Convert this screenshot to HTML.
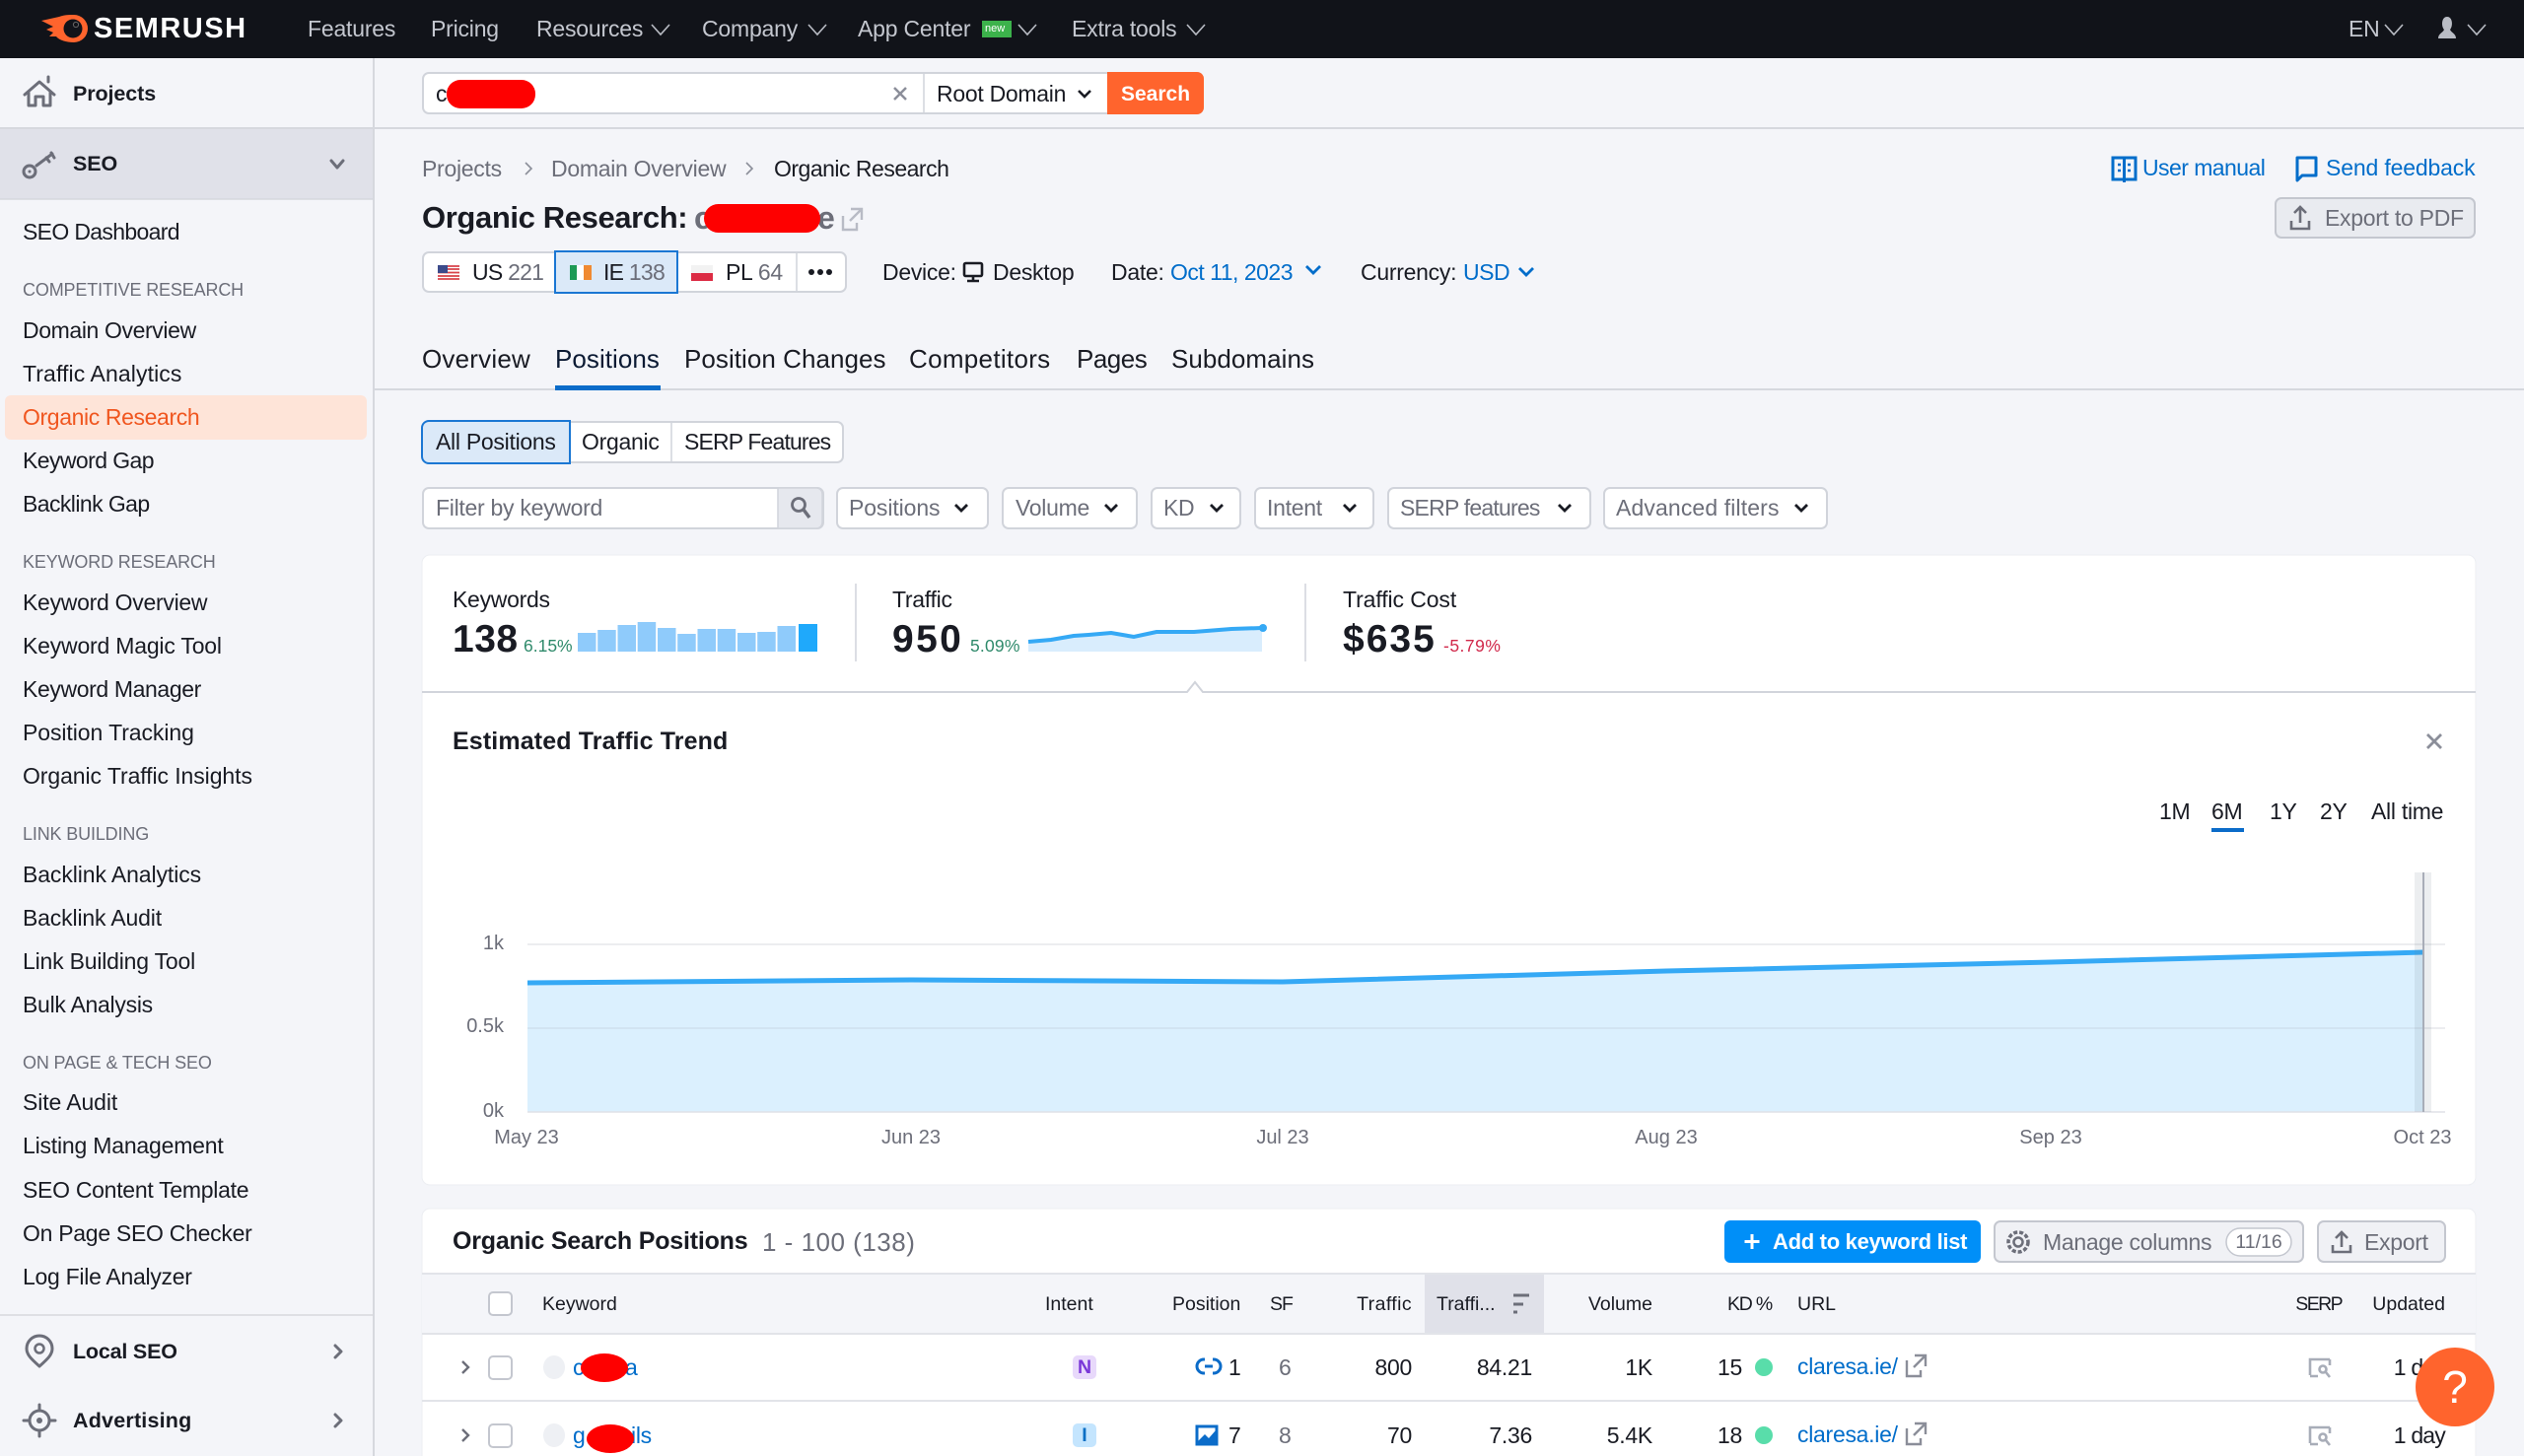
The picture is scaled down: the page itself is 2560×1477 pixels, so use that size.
<!DOCTYPE html>
<html lang="en"><head><meta charset="utf-8"><title>Organic Research</title>
<style>
html,body{margin:0;padding:0;background:#f4f5f9}
body{position:relative;width:2560px;height:1477px;overflow:hidden;font-family:"Liberation Sans",sans-serif;color:#191b23}
svg.l{position:absolute;left:0;top:0}
.t{position:absolute;white-space:nowrap;line-height:0;font-size:23px;letter-spacing:-.28px}
.r{transform:translateX(-100%)}
.c{transform:translateX(-50%)}
.b{font-weight:700}
.n{color:#c4c7cf;font-size:23px;top:29px;letter-spacing:-.2px}
.h{font-size:18px;color:#6c6e79;left:23px;letter-spacing:-.15px}
.m{font-size:21.5px;left:74px;letter-spacing:-.1px}
.s{left:23px}
.g{color:#6c6e79}
.a{color:#006dca}
.f{top:515px;color:#6c6e79}
.th{top:1323px;font-size:19.5px;letter-spacing:0}
.x{font-size:20px;letter-spacing:0;top:1154px}
.tab{font-size:26px;top:364px;letter-spacing:.05px}
.p{font-size:17.5px;letter-spacing:0;top:655px}
.blob{position:absolute;background:#fe0000;border-radius:50%/50%}
</style></head><body>
<svg class="l" width="2560" height="1477" viewBox="0 0 2560 1477" fill="none">
<!-- topbar -->
<rect width="2560" height="59" fill="#111319"/>
<path d="M42 21L60 17C65 15 70 15 75 15A14 14 0 1 1 75 43C68 43 60 41 57 37L50 37 54 33 47 30 54 27z" fill="#ff642d"/>
<circle cx="74" cy="29" r="9.5" fill="#111319"/><circle cx="77" cy="25" r="2.6" fill="none" stroke="#666" stroke-width="1"/>
<g stroke="#b9bcc4" stroke-width="1.6">
<path d="M661 25l9 10 9-10M820 25l9 10 9-10M1033 25l9 10 9-10M1204 25l9 10 9-10M2419 25l9 10 9-10M2503 25l9 10 9-10"/>
</g>
<rect x="996" y="21" width="30" height="17" fill="#3cb24b"/>
<path d="M2473 39c0-5 5-6 6-9-3-3-3-13 3-13s6 10 3 13c1 3 6 4 6 9z" fill="#b9bcc4"/>
<!-- sidebar -->
<rect x="0" y="130" width="378" height="72" fill="#e0e1e9"/>
<path d="M0 130H2560" stroke="#d6d8de" stroke-width="2"/>
<path d="M0 202H378" stroke="#d6d8de" stroke-width="1.5"/>
<path d="M379 59V1477" stroke="#d6d8de" stroke-width="2"/>
<path d="M0 1334H378" stroke="#d6d8de" stroke-width="1.5"/>
<rect x="5" y="401" width="367" height="45" rx="6" fill="#fee4d8"/>
<path d="M25 96l15-13 15 13M29 94v13h7v-9h8v9h7V94M49 78v5" stroke="#6c6e79" stroke-width="3" stroke-linejoin="round" stroke-linecap="round"/>
<circle cx="30" cy="174" r="6" stroke="#6c6e79" stroke-width="3"/><circle cx="30" cy="174" r="1.5" fill="#6c6e79"/>
<path d="M37 168l16-12M47 160l3 4M52 155l3 5" stroke="#6c6e79" stroke-width="3" stroke-linecap="round"/>
<path d="M336 163l6 7 6-7" stroke="#6c6e79" stroke-width="3" stroke-linecap="round" stroke-linejoin="round"/>
<path d="M40 1386c-9-8-13-12-13-18a13 13 0 0 1 26 0c0 6-4 10-13 18z" stroke="#6c6e79" stroke-width="3" stroke-linejoin="round"/><circle cx="40" cy="1368" r="4.5" stroke="#6c6e79" stroke-width="2.5"/>
<circle cx="40" cy="1441" r="10" stroke="#6c6e79" stroke-width="3"/><circle cx="40" cy="1441" r="3" fill="#6c6e79"/>
<path d="M40 1425v6M40 1451v6M24 1441h6M50 1441h6" stroke="#6c6e79" stroke-width="3" stroke-linecap="round"/>
<path d="M340 1365l6 6-6 6M340 1435l6 6-6 6" stroke="#6c6e79" stroke-width="3" stroke-linecap="round" stroke-linejoin="round"/>
<!-- search -->
<rect x="429" y="74" width="791" height="41" rx="6" fill="#fff" stroke="#d1d4db" stroke-width="2"/>
<path d="M937 74v41" stroke="#d1d4db" stroke-width="1.5"/>
<path d="M1123 73h91a7 7 0 0 1 7 7v29a7 7 0 0 1-7 7h-91z" fill="#ff642d"/>
<path d="M907 89l12 12M919 89l-12 12" stroke="#8b8e99" stroke-width="2.5"/>
<path d="M1094 92l6 6 6-6" stroke="#191b23" stroke-width="2.6"/>
<!-- breadcrumb arrows -->
<path d="M533 165l6 6-6 6M757 165l6 6-6 6" stroke="#8b8e99" stroke-width="1.6"/>
<path d="M855 219v14h14v-7M863 212h11v11M874 212l-12 12" stroke="#b8bbc5" stroke-width="2.4"/>
<!-- country -->
<rect x="429" y="256" width="429" height="40" rx="6" fill="#fff" stroke="#d1d4db" stroke-width="2"/>
<path d="M808 256v40" stroke="#d1d4db" stroke-width="1.5"/>
<rect x="563" y="255" width="124" height="42" fill="#dbe9f8" stroke="#1b77d3" stroke-width="2"/>
<g>
<rect x="444" y="269" width="22" height="15" fill="#fff"/><path d="M444 270h22M444 273h22M444 276.5h22M444 280h22M444 283h22" stroke="#d8434a" stroke-width="1.7"/><rect x="444" y="269" width="10" height="8" fill="#3c4b8b"/>
<rect x="578" y="269" width="7" height="15" fill="#1e9a55"/><rect x="585" y="269" width="7" height="15" fill="#fff"/><rect x="592" y="269" width="8" height="15" fill="#f08a32"/>
<rect x="701" y="269" width="22" height="8" fill="#f2f2f2"/><rect x="701" y="277" width="22" height="8" fill="#dc2c44"/>
</g>
<circle cx="823" cy="276" r="3" fill="#191b23"/><circle cx="832" cy="276" r="3" fill="#191b23"/><circle cx="841" cy="276" r="3" fill="#191b23"/>
<!-- device -->
<rect x="978" y="267" width="18" height="13" rx="1.5" stroke="#191b23" stroke-width="2.6"/><path d="M987 281v3M981 285h12" stroke="#191b23" stroke-width="2.6"/>
<path d="M1325 270l7 7 7-7M1541 272l7 7 7-7" stroke="#006dca" stroke-width="2.8"/>
<!-- top right links -->
<path d="M2143 160h23v22h-23zM2154.5 160v25" stroke="#006dca" stroke-width="3"/><path d="M2148 167h3M2148 173h3M2158 167h3M2158 173h3" stroke="#006dca" stroke-width="2.5"/>
<path d="M2330 160h19v18h-14l-5 5z" stroke="#006dca" stroke-width="3" stroke-linejoin="round"/>
<rect x="2308" y="201" width="202" height="40" rx="6" fill="#e9ebf0" stroke="#c4c7cf" stroke-width="2"/>
<path d="M2333 210v16M2327 216l6-6 6 6M2324 224v8h18v-8" stroke="#6c6e79" stroke-width="2.6"/>
<!-- tabs -->
<path d="M380 395H2560" stroke="#d6d8de" stroke-width="2"/>
<rect x="563" y="391" width="107" height="5" fill="#0b6cc9"/>
<!-- subtabs -->
<rect x="429" y="428" width="426" height="41" rx="6" fill="#fff" stroke="#d1d4db" stroke-width="2"/>
<path d="M681 428v41" stroke="#d1d4db" stroke-width="1.5"/>
<path d="M578 427H435a7 7 0 0 0-7 7v29a7 7 0 0 0 7 7h143z" fill="#dbe9f8" stroke="#1b77d3" stroke-width="2"/>
<!-- filters -->
<rect x="429" y="495" width="406" height="41" rx="6" fill="#fff" stroke="#d1d4db" stroke-width="2"/>
<path d="M789 495h39a6 6 0 0 1 6 6v29a6 6 0 0 1-6 6h-39z" fill="#e6e8ee" stroke="#d1d4db" stroke-width="1.5"/>
<circle cx="810" cy="512" r="6.5" stroke="#6c6e79" stroke-width="2.8"/><path d="M815 517l6 8" stroke="#6c6e79" stroke-width="3.5"/>
<g fill="#fff" stroke="#d1d4db" stroke-width="2">
<rect x="849" y="495" width="153" height="41" rx="6"/>
<rect x="1017" y="495" width="136" height="41" rx="6"/>
<rect x="1168" y="495" width="90" height="41" rx="6"/>
<rect x="1273" y="495" width="120" height="41" rx="6"/>
<rect x="1408" y="495" width="205" height="41" rx="6"/>
<rect x="1627" y="495" width="226" height="41" rx="6"/>
</g>
<path d="M969 512l6 6 6-6M1121 512l6 6 6-6M1228 512l6 6 6-6M1363 512l6 6 6-6M1581 512l6 6 6-6M1821 512l6 6 6-6" stroke="#191b23" stroke-width="2.8"/>
<!-- card -->
<rect x="428" y="563" width="2083" height="639" rx="8" fill="#fff" stroke="#eceef2" stroke-width="1"/>
<path d="M428 702H1204l8-10 8 10H2511" stroke="#d1d4db" stroke-width="2" fill="#fff"/>
<path d="M868 592v79M1324 592v79" stroke="#d1d4db" stroke-width="1.5"/>
<g fill="#8fcbfb">
<rect x="586" y="642" width="18.5" height="19"/><rect x="606.2" y="639" width="18.5" height="22"/><rect x="626.5" y="634" width="18.5" height="27"/><rect x="646.7" y="631" width="18.5" height="30"/><rect x="667" y="637" width="18.5" height="24"/><rect x="687.2" y="643" width="18.5" height="18"/><rect x="707.5" y="638" width="18.5" height="23"/><rect x="727.7" y="638" width="18.5" height="23"/><rect x="748" y="642" width="18.5" height="19"/><rect x="768.2" y="641" width="18.5" height="20"/><rect x="788.5" y="635" width="18.5" height="26"/>
</g>
<rect x="810" y="633" width="19" height="28" fill="#1fa9fb"/>
<path d="M1043 651L1066 649 1089 645 1104 644 1127 642 1150 646 1173 641 1211 641 1249 638 1280 637V661H1043z" fill="#d9edfd"/>
<path d="M1043 651L1066 649 1089 645 1104 644 1127 642 1150 646 1173 641 1211 641 1249 638 1280 637" stroke="#35a9f5" stroke-width="4"/>
<circle cx="1281" cy="637" r="4" fill="#35a9f5"/>
<path d="M2462 745l14 14M2476 745l-14 14" stroke="#8b8e99" stroke-width="2.8"/>
<rect x="2243" y="840" width="33" height="4" fill="#0b6cc9"/>
<!-- chart -->
<path d="M535 958H2480M535 1043H2480" stroke="#e6e7eb" stroke-width="1.5"/>
<path d="M535 997L924 994 1301 996 1690 985 2080 976 2458 966V1128H535z" fill="#dbf0fe"/>
<path d="M535 1043H2458" stroke="#cfe0ee" stroke-width="1.5"/>
<path d="M535 1128H2480" stroke="#dfe1e7" stroke-width="1.5"/>
<path d="M535 997L924 994 1301 996 1690 985 2080 976 2458 966" stroke="#35a9f5" stroke-width="5"/>
<rect x="2449" y="885" width="17" height="243" fill="#6c7a8a" fill-opacity=".13"/>
<path d="M2458 885V1128" stroke="#a8adb8" stroke-width="2"/>
<!-- table card -->
<rect x="428" y="1226" width="2083" height="260" rx="8" fill="#fff" stroke="#eceef2"/>
<rect x="428" y="1292" width="2083" height="61" fill="#f4f5f9"/>
<rect x="1445" y="1292" width="121" height="61" fill="#e0e1e9"/>
<path d="M428 1292H2511M428 1353H2511M428 1421H2511" stroke="#e2e4e9" stroke-width="2"/>
<rect x="1749" y="1238" width="260" height="43" rx="6" fill="#008ff8"/>
<path d="M1777 1252v15M1769.5 1259.5h15" stroke="#fff" stroke-width="3"/>
<rect x="2023" y="1239" width="313" height="41" rx="6" fill="#f0f1f5" stroke="#c4c7cf" stroke-width="2"/>
<rect x="2258" y="1246" width="66" height="28" rx="14" fill="#fff" stroke="#c4c7cf" stroke-width="1.5"/>
<circle cx="2047" cy="1260" r="4.5" stroke="#6c6e79" stroke-width="2.5"/><circle cx="2047" cy="1260" r="10" stroke="#6c6e79" stroke-width="3.5" stroke-dasharray="4 2"/>
<rect x="2351" y="1239" width="129" height="41" rx="6" fill="#f0f1f5" stroke="#c4c7cf" stroke-width="2"/>
<path d="M2375 1250v15M2369 1256l6-6 6 6M2366 1263v7h18v-7" stroke="#6c6e79" stroke-width="2.6"/>
<g fill="#fff" stroke="#c4c7cf" stroke-width="2">
<rect x="496" y="1311" width="23" height="23" rx="4"/>
<rect x="496" y="1376" width="23" height="23" rx="4"/>
<rect x="496" y="1445" width="23" height="23" rx="4"/>
</g>
<path d="M1535 1314h16M1535 1323h10M1535 1331h4" stroke="#6c6e79" stroke-width="3"/>
<path d="M469 1381l6 6-6 6M469 1450l6 6-6 6" stroke="#6c6e79" stroke-width="2.4"/>
<ellipse cx="562" cy="1387" rx="11" ry="12" fill="#eef0f4"/><ellipse cx="562" cy="1456" rx="11" ry="12" fill="#eef0f4"/>
<rect x="1088" y="1375" width="24" height="24" rx="5" fill="#e8d9fb"/>
<rect x="1088" y="1444" width="24" height="24" rx="5" fill="#c4e5fe"/>
<!-- link icon -->
<path d="M1222 1379h-1a7 7 0 0 0 0 14h1M1230 1379h1a7 7 0 0 1 0 14h-1M1222 1386h8" stroke="#0b6cc9" stroke-width="3"/>
<!-- image icon -->
<rect x="1214" y="1447" width="20" height="18" fill="#fff" stroke="#0b6cc9" stroke-width="3"/><path d="M1215 1462l7-7 4 4 7-8v13h-18z" fill="#0b6cc9"/>
<circle cx="1789" cy="1387" r="9" fill="#59ddaa"/><circle cx="1789" cy="1456" r="9" fill="#59ddaa"/>
<g stroke="#8b8e99" stroke-width="2.4">
<path d="M1934 1380v16h14v-6M1942 1375h11v11M1953 1375l-12 12"/>
<path d="M1934 1449v16h14v-6M1942 1444h11v11M1953 1444l-12 12"/>
</g>
<g stroke="#a8adb8" stroke-width="2.6">
<path d="M2343 1395v-16h20M2351 1396h-8M2363 1379v6"/><circle cx="2356" cy="1389" r="3.5"/><path d="M2359 1392l4 5"/>
<path d="M2343 1464v-16h20M2351 1465h-8M2363 1448v6"/><circle cx="2356" cy="1458" r="3.5"/><path d="M2359 1461l4 5"/>
</g>
</svg>

<!-- topbar text -->
<div class="t b" style="left:95px;top:29px;font-size:29px;color:#fff;letter-spacing:1.5px">SEMRUSH</div>
<div class="t n" style="left:312px">Features</div>
<div class="t n" style="left:437px">Pricing</div>
<div class="t n" style="left:544px">Resources</div>
<div class="t n" style="left:712px">Company</div>
<div class="t n" style="left:870px">App Center</div>
<div class="t" style="left:999px;top:29px;font-size:11px;color:#fff;letter-spacing:0">new</div>
<div class="t n" style="left:1087px">Extra tools</div>
<div class="t n" style="left:2382px">EN</div>

<!-- sidebar -->
<div class="t b m" style="top:95px">Projects</div>
<div class="t b m" style="top:166px">SEO</div>
<div class="t s" style="top:235px;letter-spacing:-.66px">SEO Dashboard</div>
<div class="t h" style="top:294px">COMPETITIVE RESEARCH</div>
<div class="t s" style="top:335px;letter-spacing:-.38px">Domain Overview</div>
<div class="t s" style="top:379px;letter-spacing:.1px">Traffic Analytics</div>
<div class="t s" style="top:423px;color:#f0561f;letter-spacing:-.38px">Organic Research</div>
<div class="t s" style="top:467px;letter-spacing:-.58px">Keyword Gap</div>
<div class="t s" style="top:511px;letter-spacing:-.58px">Backlink Gap</div>
<div class="t h" style="top:570px">KEYWORD RESEARCH</div>
<div class="t s" style="top:611px">Keyword Overview</div>
<div class="t s" style="top:655px;letter-spacing:-.2px">Keyword Magic Tool</div>
<div class="t s" style="top:699px;letter-spacing:-.38px">Keyword Manager</div>
<div class="t s" style="top:743px;letter-spacing:-.08px">Position Tracking</div>
<div class="t s" style="top:787px;letter-spacing:-.08px">Organic Traffic Insights</div>
<div class="t h" style="top:846px">LINK BUILDING</div>
<div class="t s" style="top:887px;letter-spacing:-.1px">Backlink Analytics</div>
<div class="t s" style="top:931px;letter-spacing:-.16px">Backlink Audit</div>
<div class="t s" style="top:975px;letter-spacing:-.2px">Link Building Tool</div>
<div class="t s" style="top:1019px">Bulk Analysis</div>
<div class="t h" style="top:1078px">ON PAGE &amp; TECH SEO</div>
<div class="t s" style="top:1118px;letter-spacing:-.1px">Site Audit</div>
<div class="t s" style="top:1162px;letter-spacing:-.2px">Listing Management</div>
<div class="t s" style="top:1207px">SEO Content Template</div>
<div class="t s" style="top:1251px">On Page SEO Checker</div>
<div class="t s" style="top:1295px">Log File Analyzer</div>
<div class="t b m" style="top:1371px;letter-spacing:-.2px">Local SEO</div>
<div class="t b m" style="top:1441px;letter-spacing:.2px">Advertising</div>

<!-- search -->
<div class="t" style="left:442px;top:95px">c</div>
<div class="t" style="left:950px;top:95px">Root Domain</div>
<div class="t b" style="left:1137px;top:96px;color:#fff;font-size:21px;letter-spacing:0">Search</div>

<!-- breadcrumbs -->
<div class="t g" style="left:428px;top:171px">Projects</div>
<div class="t g" style="left:559px;top:171px">Domain Overview</div>
<div class="t" style="left:785px;top:171px;letter-spacing:-.5px">Organic Research</div>
<div class="t b" style="left:428px;top:221px;font-size:31px;letter-spacing:-.38px">Organic Research:</div>
<div class="t b" style="left:704px;top:221px;font-size:32px;color:#6c6e79">c</div>
<div class="t b" style="left:829px;top:221px;font-size:32px;color:#6c6e79">e</div>
<div class="t a" style="left:2173px;top:170px;letter-spacing:-.55px">User manual</div>
<div class="t a" style="left:2359px;top:170px;letter-spacing:-.15px">Send feedback</div>
<div class="t g" style="left:2358px;top:221px">Export to PDF</div>

<!-- country row -->
<div class="t" style="left:479px;top:276px;letter-spacing:-.75px">US <span class="g">221</span></div>
<div class="t" style="left:612px;top:276px;letter-spacing:-.75px">IE <span class="g">138</span></div>
<div class="t" style="left:736px;top:276px">PL <span class="g">64</span></div>
<div class="t" style="left:895px;top:276px">Device:</div>
<div class="t" style="left:1007px;top:276px">Desktop</div>
<div class="t" style="left:1127px;top:276px">Date:</div>
<div class="t a" style="left:1187px;top:276px;letter-spacing:-.5px">Oct 11, 2023</div>
<div class="t" style="left:1380px;top:276px">Currency:</div>
<div class="t a" style="left:1484px;top:276px;letter-spacing:-.5px">USD</div>

<!-- tabs -->
<div class="t tab" style="left:428px;letter-spacing:.2px">Overview</div>
<div class="t tab" style="left:563px;color:#0b1a33">Positions</div>
<div class="t tab" style="left:694px">Position Changes</div>
<div class="t tab" style="left:922px;letter-spacing:.3px">Competitors</div>
<div class="t tab" style="left:1092px;letter-spacing:-.5px">Pages</div>
<div class="t tab" style="left:1188px">Subdomains</div>

<div class="t" style="left:442px;top:448px">All Positions</div>
<div class="t" style="left:590px;top:448px">Organic</div>
<div class="t" style="left:694px;top:448px;letter-spacing:-.85px">SERP Features</div>

<div class="t f" style="left:442px">Filter by keyword</div>
<div class="t f" style="left:861px;letter-spacing:-.1px">Positions</div>
<div class="t f" style="left:1030px">Volume</div>
<div class="t f" style="left:1180px">KD</div>
<div class="t f" style="left:1285px">Intent</div>
<div class="t f" style="left:1420px;letter-spacing:-.78px">SERP features</div>
<div class="t f" style="left:1639px;letter-spacing:.12px">Advanced filters</div>

<!-- metrics -->
<div class="t" style="left:459px;top:608px">Keywords</div>
<div class="t b" style="left:459px;top:649px;font-size:39px;letter-spacing:.5px">138</div>
<div class="t p" style="left:531px;color:#2f8a6b">6.15%</div>
<div class="t" style="left:905px;top:608px">Traffic</div>
<div class="t b" style="left:905px;top:649px;font-size:39px;letter-spacing:2.4px">950</div>
<div class="t p" style="left:984px;color:#2f8a6b;letter-spacing:.2px">5.09%</div>
<div class="t" style="left:1362px;top:608px;letter-spacing:-.1px">Traffic Cost</div>
<div class="t b" style="left:1362px;top:649px;font-size:39px;letter-spacing:2px">$635</div>
<div class="t p" style="left:1464px;color:#d1294b;letter-spacing:.5px">-5.79%</div>

<div class="t b" style="left:459px;top:752px;font-size:25px;letter-spacing:.13px">Estimated Traffic Trend</div>
<div class="t" style="left:2190px;top:823px">1M</div>
<div class="t" style="left:2243px;top:823px">6M</div>
<div class="t" style="left:2302px;top:823px">1Y</div>
<div class="t" style="left:2353px;top:823px">2Y</div>
<div class="t" style="left:2405px;top:823px">All time</div>

<div class="t g r" style="left:511px;top:957px;font-size:20px;letter-spacing:0">1k</div>
<div class="t g r" style="left:511px;top:1041px;font-size:20px;letter-spacing:0">0.5k</div>
<div class="t g r" style="left:511px;top:1127px;font-size:20px;letter-spacing:0">0k</div>
<div class="t g c x" style="left:534px">May 23</div>
<div class="t g c x" style="left:924px">Jun 23</div>
<div class="t g c x" style="left:1301px">Jul 23</div>
<div class="t g c x" style="left:1690px">Aug 23</div>
<div class="t g c x" style="left:2080px">Sep 23</div>
<div class="t g c x" style="left:2457px">Oct 23</div>

<!-- table -->
<div class="t b" style="left:459px;top:1259px;font-size:25px;letter-spacing:-.2px">Organic Search Positions</div>
<div class="t g" style="left:773px;top:1260px;font-size:26px;letter-spacing:.5px">1 - 100 (138)</div>
<div class="t b" style="left:1798px;top:1260px;color:#fff;font-size:22px;letter-spacing:-.3px">Add to keyword list</div>
<div class="t g" style="left:2072px;top:1260px">Manage columns</div>
<div class="t g c" style="left:2291px;top:1260px;font-size:19.5px;letter-spacing:0">11/16</div>
<div class="t g" style="left:2398px;top:1260px">Export</div>

<div class="t th" style="left:550px">Keyword</div>
<div class="t th" style="left:1060px">Intent</div>
<div class="t th" style="left:1189px">Position</div>
<div class="t th" style="left:1288px;letter-spacing:-1px">SF</div>
<div class="t th r" style="left:1432px;letter-spacing:.4px">Traffic</div>
<div class="t th" style="left:1457px">Traffi...</div>
<div class="t th r" style="left:1676px">Volume</div>
<div class="t th r" style="left:1797px;letter-spacing:-1.2px">KD %</div>
<div class="t th" style="left:1823px">URL</div>
<div class="t th r" style="left:2375px;letter-spacing:-1.6px">SERP</div>
<div class="t th r" style="left:2480px">Updated</div>

<div class="t a" style="left:581px;top:1387px">c</div>
<div class="t a" style="left:622px;top:1387px;letter-spacing:.5px">sa</div>
<div class="t a" style="left:581px;top:1456px">g</div>
<div class="t a" style="left:640px;top:1456px">ils</div>
<div class="t b c" style="left:1100px;top:1387px;font-size:19.5px;color:#7a37d8;letter-spacing:0">N</div>
<div class="t b c" style="left:1100px;top:1456px;font-size:19.5px;color:#0a6fc4;letter-spacing:0">I</div>
<div class="t" style="left:1246px;top:1387px">1</div>
<div class="t" style="left:1246px;top:1456px">7</div>
<div class="t g" style="left:1297px;top:1387px">6</div>
<div class="t g" style="left:1297px;top:1456px">8</div>
<div class="t r" style="left:1432px;top:1387px">800</div>
<div class="t r" style="left:1432px;top:1456px">70</div>
<div class="t r" style="left:1554px;top:1387px">84.21</div>
<div class="t r" style="left:1554px;top:1456px">7.36</div>
<div class="t r" style="left:1676px;top:1387px">1K</div>
<div class="t r" style="left:1676px;top:1456px">5.4K</div>
<div class="t r" style="left:1767px;top:1387px">15</div>
<div class="t r" style="left:1767px;top:1456px">18</div>
<div class="t a" style="left:1823px;top:1386px">claresa.ie/</div>
<div class="t a" style="left:1823px;top:1455px">claresa.ie/</div>
<div class="t r" style="left:2480px;top:1387px;letter-spacing:-.8px">1 day</div>
<div class="t r" style="left:2480px;top:1456px;letter-spacing:-.8px">1 day</div>

<!-- redactions -->
<div class="blob" style="left:453px;top:81px;width:90px;height:29px;border-radius:14px/14px"></div>
<div class="blob" style="left:714px;top:207px;width:118px;height:29px;border-radius:15px"></div>
<div class="blob" style="left:589px;top:1373px;width:48px;height:29px"></div>
<div class="blob" style="left:595px;top:1445px;width:48px;height:29px"></div>

<!-- help -->
<div style="position:absolute;left:2450px;top:1367px;width:80px;height:80px;border-radius:50%;background:#ff642d;color:#fff;font-size:46px;line-height:80px;text-align:center;font-weight:400">?</div>
</body></html>
